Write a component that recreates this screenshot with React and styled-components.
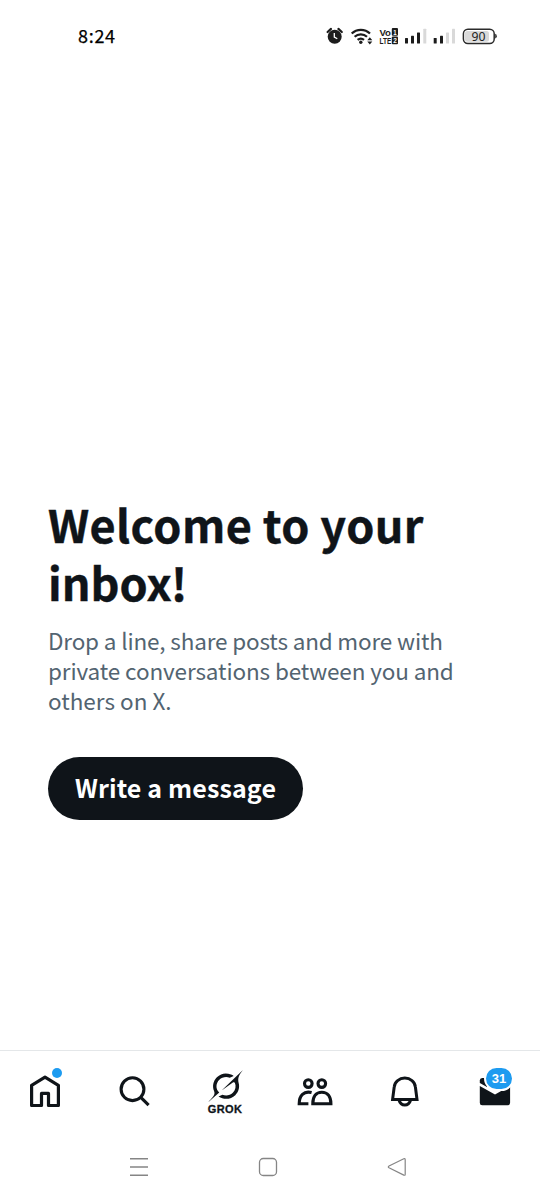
import React from 'react'
import styled, { createGlobalStyle } from 'styled-components'

const GlobalStyle = createGlobalStyle`
  * {
    box-sizing: border-box;
  }

  body {
    margin: 0;
    background: #ffffff;
    font-family: "Noto Sans CJK SC", "Noto Sans", sans-serif;
  }
`

const Screen = styled.div`
  width: 540px;
  height: 1200px;
  display: flex;
  flex-direction: column;
  overflow: hidden;
  background: #ffffff;
  color: #0f1419;
`

const StatusBar = styled.header`
  height: 72px;
  padding: 0 43px 0 78px;
  display: flex;
  align-items: center;
  justify-content: space-between;
`

const Clock = styled.time`
  padding-bottom: 2px;
  font-size: 18px;
  font-weight: 400;
  letter-spacing: 0.7px;
  line-height: 24px;
  color: #000000;
  -webkit-text-stroke: 0.25px #000000;
`

const Drawing = styled.svg`
  display: block;
  flex: none;
  overflow: visible;
`

const Main = styled.main`
  flex: 1;
  padding: 423px 48px 0;
`

const Title = styled.h1`
  margin: 0;
  font-size: 45px;
  font-weight: 700;
  line-height: 58px;
  -webkit-text-stroke: 0.4px #0f1419;
`

const Description = styled.p`
  margin: 14px 0 0;
  font-size: 22.5px;
  font-weight: 400;
  line-height: 30px;
  color: #536471;
`

const Line = styled.span`
  display: block;
  white-space: nowrap;
  letter-spacing: ${(props) => props.$spacing || 0}px;
`

const Button = styled.button`
  display: flex;
  align-items: center;
  justify-content: center;
  width: 255px;
  height: 63px;
  margin-top: 42px;
  padding: 0 0 4px;
  border: 0;
  border-radius: 32px;
  background: #0f1419;
  color: #ffffff;
  font-family: inherit;
  font-size: 25px;
  font-weight: 700;
  line-height: 30px;
`

const TabBar = styled.nav`
  height: 84px;
  display: grid;
  grid-template-columns: repeat(6, 90px);
  border-top: 1px solid #e4e7e9;
`

const Tab = styled.div`
  position: relative;
  display: flex;
  flex-direction: column;
  align-items: center;
  padding-top: 17px;
`

const TabLabel = styled.span`
  margin-top: -3px;
  font-family: "Liberation Sans", Arial, sans-serif;
  font-size: 11px;
  font-weight: 700;
  letter-spacing: 0.35px;
  line-height: 12px;
  -webkit-text-stroke: 0.3px #0f1419;
`

const Dot = styled.span`
  position: absolute;
  top: 17px;
  left: 52px;
  width: 10px;
  height: 10px;
  border-radius: 50%;
  background: #1d9bf0;
`

const Badge = styled.span`
  position: absolute;
  top: 15px;
  left: 34px;
  width: 30px;
  height: 25px;
  display: flex;
  align-items: center;
  justify-content: center;
  border: 2px solid #ffffff;
  border-radius: 13px;
  background: #1d9bf0;
  color: #ffffff;
  font-family: "Liberation Sans", Arial, sans-serif;
  font-size: 13px;
  font-weight: 700;
  line-height: 16px;
`

const SystemBar = styled.footer`
  height: 66px;
  padding: 23px 133px 0 129px;
  display: flex;
  justify-content: space-between;
`

const StatusIcons = () => (
  <Drawing width="171" height="20" viewBox="326 26 171 20">
    <g stroke="#1c1c1c" fill="none">
      <circle cx="334.7" cy="36.7" r="7" fill="#1c1c1c" stroke="none" />
      <path d="M327.6 32 L331 28.9 M341.8 32 L338.4 28.9" strokeWidth="2.2" strokeLinecap="round" />
      <path d="M334.3 33 V37 L337.3 38.7" stroke="#ffffff" strokeWidth="1.3" />
      <path d="M351.7 33.5 A13.2 13.2 0 0 1 370 33.5 M354.6 36.8 A9 9 0 0 1 367 36.8 M357.6 39.9 A4.9 4.9 0 0 1 364 39.9" strokeWidth="2.2" />
      <circle cx="360.8" cy="42.3" r="1.7" fill="#1c1c1c" stroke="none" />
      <path d="M367.3 40.2 L369.8 37.2 L372.3 40.2 Z M367.3 41.6 L369.8 44.6 L372.3 41.6 Z" fill="#1c1c1c" stroke="none" />
      <rect x="391.8" y="28" width="6.2" height="7.8" rx="1" fill="#1c1c1c" stroke="none" />
      <rect x="391.8" y="36.5" width="6.2" height="7.8" rx="1" fill="#1c1c1c" stroke="none" />
    </g>
    <g fontFamily="Liberation Sans" fontWeight="700" fill="#1c1c1c">
      <text x="379.4" y="35.6" fontSize="9.6" textLength="11.6" lengthAdjust="spacingAndGlyphs">Vo</text>
      <text x="379.6" y="44.1" fontSize="9.8" textLength="11.8" lengthAdjust="spacingAndGlyphs">LTE</text>
      <text x="393.2" y="34.5" fontSize="7" textLength="3.4" lengthAdjust="spacingAndGlyphs" fill="#ffffff">1</text>
      <text x="393.2" y="43" fontSize="7" textLength="3.6" lengthAdjust="spacingAndGlyphs" fill="#ffffff">2</text>
    </g>
    <g fill="#1c1c1c">
      <rect x="405" y="38" width="3" height="5.5" rx="0.5" />
      <rect x="411" y="35.7" width="3" height="7.8" rx="0.5" />
      <rect x="417" y="32.5" width="3" height="11" rx="0.5" />
      <rect x="433.7" y="38" width="3" height="5.5" rx="0.5" />
      <rect x="440" y="35.7" width="3" height="7.8" rx="0.5" />
    </g>
    <g fill="#d9d9d9">
      <rect x="423.3" y="28.7" width="3" height="14.8" rx="0.5" />
      <rect x="446" y="32.5" width="3" height="11" rx="0.5" />
      <rect x="452" y="28.7" width="3" height="14.8" rx="0.5" />
    </g>
    <rect x="465" y="31" width="24" height="10.7" rx="2.5" fill="#d9d9d9" />
    <rect x="463.4" y="29.2" width="30.8" height="14.4" rx="4.5" fill="none" stroke="#2b2b2b" strokeWidth="1.5" />
    <path d="M495.2 33.8 Q496.8 34.2 496.8 36.2 Q496.8 38.2 495.2 38.6 Z" fill="#2b2b2b" />
    <text x="478.6" y="40.7" textAnchor="middle" fontSize="12.2" fontFamily="Noto Sans" fill="#222222">90</text>
  </Drawing>
)

const HomeIcon = () => (
  <Drawing width="40" height="44" viewBox="25 1068 40 44" fill="none" stroke="#0f1419" strokeWidth="3.2" strokeLinejoin="round">
    <path d="M45 1077.2 L31.6 1085.4 V1105.5 H41.5 V1093.4 H48.5 V1105.5 H58.4 V1085.4 Z" />
  </Drawing>
)

const SearchIcon = () => (
  <Drawing width="40" height="44" viewBox="115 1068 40 44" fill="none" stroke="#0f1419" strokeWidth="3.1">
    <circle cx="132.5" cy="1089.2" r="11.4" />
    <path d="M140.8 1097.4 L148.6 1105.2" />
  </Drawing>
)

const GrokIcon = () => (
  <Drawing width="40" height="38" viewBox="205 1068 40 38" fill="#0f1419">
    <path
      transform="translate(208.2 1069.2) scale(1.45 1.4)"
      d="M9.27 15.29l7.978-5.897c.391-.29.95-.177 1.137.272.98 2.369.542 5.215-1.41 7.169-1.951 1.954-4.667 2.382-7.149 1.406l-2.711 1.257c3.889 2.661 8.611 2.003 11.562-.953 2.341-2.344 3.066-5.539 2.388-8.42l.006.007c-.983-4.232.242-5.924 2.75-9.383.06-.082.12-.164.179-.248l-3.301 3.305v-.01L9.267 15.292M7.623 16.723c-2.792-2.67-2.31-6.801.071-9.184 1.761-1.763 4.647-2.483 7.166-1.425l2.705-1.25a7.808 7.808 0 00-1.829-1A8.975 8.975 0 005.984 5.83c-2.533 2.536-3.33 6.436-1.962 9.764 1.022 2.487-.653 4.246-2.34 6.022-.599.63-1.199 1.259-1.682 1.925l7.62-6.815"
    />
  </Drawing>
)

const PeopleIcon = () => (
  <Drawing width="40" height="44" viewBox="295 1068 40 44" fill="none" stroke="#0f1419" strokeWidth="3.1">
    <circle cx="308.3" cy="1083.6" r="3.8" />
    <circle cx="321.8" cy="1083.6" r="3.8" />
    <path d="M311.6 1092.6 C303.8 1090.6 299.2 1095.6 299.2 1103.7 H308.4" />
    <path d="M312.8 1103.7 C312.8 1096.6 316 1092.2 321.8 1092.2 C327.6 1092.2 330.9 1096.6 330.9 1103.7 Z" />
  </Drawing>
)

const BellIcon = () => (
  <Drawing width="40" height="44" viewBox="385 1068 40 44" fill="none" stroke="#0f1419" strokeWidth="3">
    <path d="M394.2 1087 C394.7 1081.7 399.3 1078.1 404.8 1078.1 C410.3 1078.1 414.9 1081.7 415.4 1087 L417 1099.4 H392.6 Z" />
    <path d="M399 1100 C400 1103.4 402.2 1105 404.8 1105 C407.4 1105 409.6 1103.4 410.6 1100" />
  </Drawing>
)

const MailIcon = () => (
  <Drawing width="40" height="44" viewBox="475 1068 40 44" fill="#0f1419">
    <path d="M479.8 1083 V1080.5 Q479.8 1078 482.2 1078 H487 V1087 Z" />
    <path d="M479.8 1086 L495 1094.6 L510.1 1086 V1102.8 Q510.1 1105.3 507.6 1105.3 H482.2 Q479.8 1105.3 479.8 1102.8 Z" />
  </Drawing>
)

const App = () => {
  return (
    <Screen>
      <GlobalStyle />
      <StatusBar>
        <Clock>8:24</Clock>
        <StatusIcons />
      </StatusBar>
      <Main>
        <Title>
          <Line $spacing={0.37}>Welcome to your</Line>
          <Line>inbox!</Line>
        </Title>
        <Description>
          <Line $spacing={-0.16}>Drop a line, share posts and more with</Line>
          <Line $spacing={-0.12}>private conversations between you and</Line>
          <Line>others on X.</Line>
        </Description>
        <Button type="button">
          <Line $spacing={0.13}>Write a message</Line>
        </Button>
      </Main>
      <TabBar>
        <Tab>
          <HomeIcon />
          <Dot />
        </Tab>
        <Tab><SearchIcon /></Tab>
        <Tab>
          <GrokIcon />
          <TabLabel>GROK</TabLabel>
        </Tab>
        <Tab><PeopleIcon /></Tab>
        <Tab><BellIcon /></Tab>
        <Tab>
          <MailIcon />
          <Badge>31</Badge>
        </Tab>
      </TabBar>
      <SystemBar>
        <Drawing width="20" height="20" viewBox="129 1157 20 20" fill="none" stroke="#858585" strokeWidth="1.4">
          <path d="M130 1158.7 H148 M130 1167 H148 M130 1175.2 H148" />
        </Drawing>
        <Drawing width="20" height="20" viewBox="258 1157 20 20" fill="none" stroke="#858585" strokeWidth="1.3">
          <rect x="259.5" y="1158.5" width="17" height="17" rx="3.8" />
        </Drawing>
        <Drawing width="20" height="20" viewBox="387 1157 20 20" fill="none" stroke="#858585" strokeWidth="1.2" strokeLinejoin="round">
          <path d="M389 1166 L403.8 1158.8 Q405.2 1158.3 405.2 1159.8 V1174.2 Q405.2 1175.7 403.8 1175.1 L389 1167.8 Q387.6 1166.9 389 1166 Z" />
        </Drawing>
      </SystemBar>
    </Screen>
  )
}

export default App
